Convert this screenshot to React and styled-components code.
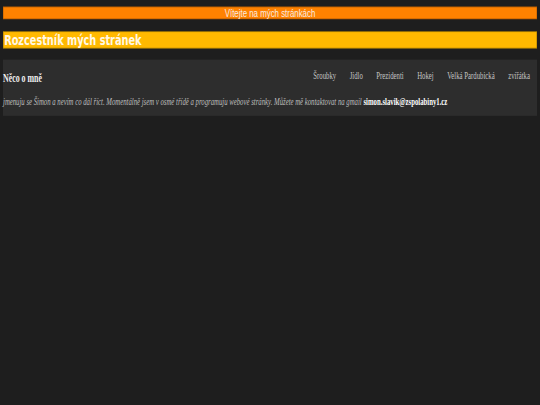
import React from 'react';
import styled, { createGlobalStyle } from 'styled-components';

const links = ['Šroubky', 'Jídlo', 'Prezidenti', 'Hokej', 'Velká Pardubická', 'zvířátka'];

// the reference was taken at 1440x720 and squeezed into 540x405
const GlobalStyle = createGlobalStyle`
  html, body {
    margin: 0;
    padding: 0;
    background: #1e1e1e;
    overflow: hidden;
  }
`;

const Frame = styled.div`
  width: 540px;
  height: 405px;
  overflow: hidden;
`;

const Stage = styled.div`
  width: 1440px;
  height: 720px;
  transform: scale(0.375, 0.5625);
  transform-origin: 0 0;
`;

const Page = styled.div`
  height: 100%;
  box-sizing: border-box;
  padding: 12px 8px;
  background: #1e1e1e;
  display: flex;
  flex-direction: column;
  gap: 22px;
`;

const Welcome = styled.div`
  background: #ff8200;
  border: 1px solid #a85400;
  color: #f8ece0;
  text-align: center;
  font-family: "Liberation Sans", Arial, sans-serif;
  font-size: 21px;
  line-height: 20px;
`;

const Title = styled.h1`
  margin: 0;
  background: #ffb900;
  border: 1px solid #8c6a00;
  color: #fff8e6;
  font-family: "DejaVu Sans", sans-serif;
  font-weight: bold;
  font-size: 26px;
  line-height: 28px;
  padding: 0 0 0 2px;
`;

const Panel = styled.section`
  margin-top: -2px;
  background: #2d2d2d;
  font-family: "Liberation Serif", "Times New Roman", serif;
  padding-bottom: 14px;
`;

const TopRow = styled.div`
  display: flex;
  justify-content: space-between;
  align-items: flex-start;
`;

const Heading = styled.h3`
  margin: 21px 0 0 0;
  font-size: 21px;
  font-weight: bold;
  color: #f0f0f0;
`;

const Nav = styled.nav`
  display: flex;
  gap: 36px;
  padding: 18px 19px 0 0;
`;

const NavLink = styled.a`
  font-size: 18px;
  color: #c4c4c4;
  text-decoration: none;
  cursor: pointer;
`;

const About = styled.p`
  margin: 19px 0 0 0;
  font-size: 18px;
  font-style: italic;
  color: #bdbdbd;

  b {
    font-style: normal;
    color: #ffffff;
  }
`;

export default function App() {
  return (
    <>
      <GlobalStyle />
      <Frame>
        <Stage>
          <Page>
            <Welcome>Vítejte na mých stránkách</Welcome>
            <Title>Rozcestník mých stránek</Title>
            <Panel>
              <TopRow>
                <Heading>Něco o mně</Heading>
                <Nav>
                  {links.map((l) => (
                    <NavLink key={l}>{l}</NavLink>
                  ))}
                </Nav>
              </TopRow>
              <About>
                jmenuju se Šimon a nevím co dál říct. Momentálně jsem v osmé třídě a programuju webové
                stránky. Můžete mě kontaktovat na gmail <b>simon.slavik@zspolabiny1.cz</b>
              </About>
            </Panel>
          </Page>
        </Stage>
      </Frame>
    </>
  );
}
